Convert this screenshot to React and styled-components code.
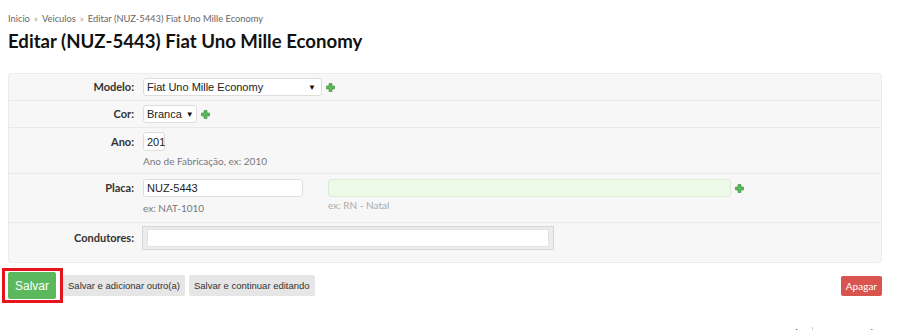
import React from "react";
import styled, { createGlobalStyle } from "styled-components";

const GlobalStyle = createGlobalStyle`
  body {
    margin: 0;
    background: #fff;
    font-family: "Lato", "Liberation Sans", sans-serif;
    color: #333;
  }
`;

const Page = styled.div`
  width: 874px;
  padding: 12px 0 0 8px;
`;

const Breadcrumb = styled.div`
  font-size: 9.3px;
  color: #666;
  line-height: 14px;
  span {
    color: #aaa;
    margin: 0 4px;
  }
`;

const Title = styled.h1`
  font-size: 18.6px;
  font-weight: 700;
  margin: 3px 0 0;
  line-height: 24px;
  color: #111;
`;

const Fieldset = styled.div`
  margin-top: 20px;
  background: #f7f7f7;
  border: 1px solid #ececec;
  border-radius: 3px;
`;

const Row = styled.div`
  display: flex;
  align-items: flex-start;
  padding: ${(p) => p.$pad || "4px 0 4px"};
  border-top: ${(p) => (p.$first ? "none" : "1px solid #e9e9e9")};
`;

const Label = styled.label`
  width: 125px;
  margin-right: 9px;
  text-align: right;
  font-weight: 700;
  font-size: 11px;
  line-height: ${(p) => p.$lh || "18px"};
  color: #333;
`;

const Field = styled.div`
  display: flex;
  flex-direction: column;
  margin-right: ${(p) => p.$mr || 0};
`;

const Inline = styled.div`
  display: flex;
  align-items: center;
`;

const Select = styled.div`
  box-sizing: border-box;
  width: ${(p) => p.$w};
  height: 18px;
  background: #fff;
  border: 1px solid #ddd;
  border-radius: 3px;
  display: flex;
  align-items: center;
  justify-content: space-between;
  padding: 0 5px 0 3px;
  font-family: "Liberation Sans", Arial, sans-serif;
  font-size: 11px;
  color: #222;
  &::after {
    content: "▼";
    font-size: 8px;
    color: #111;
    margin-left: 4px;
  }
`;

const Input = styled.div`
  box-sizing: border-box;
  width: ${(p) => p.$w};
  height: ${(p) => p.$h || "19px"};
  background: ${(p) => p.$bg || "#fff"};
  border: 1px solid ${(p) => p.$bd || "#ddd"};
  border-radius: 3px;
  padding: 0 3px;
  display: flex;
  align-items: center;
  font-family: "Liberation Sans", Arial, sans-serif;
  font-size: 11px;
  color: #222;
`;

const Help = styled.div`
  font-size: 10px;
  color: ${(p) => (p.$light ? "#aaa" : "#777")};
  margin-top: ${(p) => p.$mt || "4px"};
  line-height: 12px;
`;

const MultiBox = styled.div`
  box-sizing: border-box;
  width: 412px;
  height: 24px;
  margin-left: -1px;
  background: #ececec;
  border: 1px solid #d6d6d6;
  padding: 2px 4px;
`;

const MultiInput = styled.div`
  height: 100%;
  box-sizing: border-box;
  background: #fff;
  border: 1px solid #e2e2e2;
  border-radius: 2px;
`;

const Actions = styled.div`
  display: flex;
  align-items: center;
  margin-top: 5px;
`;

const Highlight = styled.div`
  border: 3px solid #e8141b;
  padding: 1px 4px 1px 3px;
  margin-left: -6px;
  display: flex;
`;

const Button = styled.button`
  border: none;
  border-radius: 2px;
  cursor: pointer;
  font-family: "Liberation Sans", Arial, sans-serif;
  font-size: ${(p) => (p.$primary ? "12px" : "9.5px")};
  height: ${(p) => (p.$primary ? "27px" : "21px")};
  padding: 0 ${(p) => (p.$primary ? "7px" : "5px")};
  background: ${(p) => (p.$primary ? "#5cb85c" : "#e6e6e6")};
  color: ${(p) => (p.$primary ? "#fff" : "#333")};
  margin-right: ${(p) => (p.$primary ? "0" : "4px")};
`;

const DangerButton = styled.button`
  margin-left: auto;
  border: none;
  border-radius: 2px;
  height: 20px;
  padding: 0 5px;
  background: #d9534f;
  color: #fff;
  font-family: "Lato", sans-serif;
  font-size: 10px;
`;

const Footer = styled.div`
  display: flex;
  justify-content: flex-end;
  margin-top: 24px;
  font-size: 11px;
  color: #555;
  span {
    border-left: 1px solid #ccc;
    padding-left: 8px;
    margin-left: 8px;
  }
`;

const Plus = () => (
  <svg width="9" height="9" viewBox="0 0 9 9" style={{ marginLeft: 4 }}>
    <path
      d="M3 0.5h3v2.5h2.5v3h-2.5v2.5h-3v-2.5h-2.5v-3h2.5z"
      fill="#5cb85c"
      stroke="#3d8b3d"
      strokeWidth="0.6"
    />
  </svg>
);

export default function App() {
  return (
    <>
      <GlobalStyle />
      <Page>
        <Breadcrumb>
          Inicio<span>»</span>Veiculos<span>»</span>Editar (NUZ-5443) Fiat Uno Mille Economy
        </Breadcrumb>
        <Title>Editar (NUZ-5443) Fiat Uno Mille Economy</Title>
        <Fieldset>
          <Row $first>
            <Label>Modelo:</Label>
            <Inline>
              <Select $w="179px">Fiat Uno Mille Economy</Select>
              <Plus />
            </Inline>
          </Row>
          <Row>
            <Label>Cor:</Label>
            <Inline>
              <Select $w="54px">Branca</Select>
              <Plus />
            </Inline>
          </Row>
          <Row $pad="4px 0 6px">
            <Label $lh="19px">Ano:</Label>
            <Field>
              <Input $w="22px">201</Input>
              <Help $mt="4px">Ano de Fabricação, ex: 2010</Help>
            </Field>
          </Row>
          <Row $pad="5px 0 8px">
            <Label>Placa:</Label>
            <Field $mr="25px">
              <Input $w="160px" $h="18px">NUZ-5443</Input>
              <Help $mt="5px">ex: NAT-1010</Help>
            </Field>
            <Field>
              <Inline>
                <Input $w="403px" $h="18px" $bg="#eefae8" $bd="#dcebd5" />
                <Plus />
              </Inline>
              <Help $light $mt="2px">ex: RN - Natal</Help>
            </Field>
          </Row>
          <Row $pad="3px 0 12px">
            <Label $lh="24px">Condutores:</Label>
            <MultiBox>
              <MultiInput />
            </MultiBox>
          </Row>
        </Fieldset>
        <Actions>
          <Highlight>
            <Button $primary>Salvar</Button>
          </Highlight>
          <Button>Salvar e adicionar outro(a)</Button>
          <Button>Salvar e continuar editando</Button>
          <DangerButton>Apagar</DangerButton>
        </Actions>
        <Footer>
          Início<span>Trocar senha</span>
        </Footer>
      </Page>
    </>
  );
}
